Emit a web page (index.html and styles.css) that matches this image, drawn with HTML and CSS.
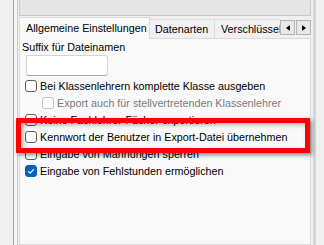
FILE: index.html
```html
<!DOCTYPE html>
<html lang="de">
<head>
    <meta charset="UTF-8">
    <title>Export-Einstellungen</title>
    <link rel="stylesheet" href="styles.css">
</head>
<body>
    <div class="window">
        <div class="splitter"></div>

        <div class="panel">
            <div class="toolbar"></div>

            <!-- Tabs -->
            <div class="tabstrip">
                <div class="tabs">
                    <div class="tab active">Allgemeine Einstellungen</div>
                    <div class="tab">Datenarten</div>
                    <div class="tab">Verschlüsselung</div>
                </div>
                <div class="tab-scroll">
                    <span class="scroll-btn"><span class="arrow left"></span></span>
                    <span class="scroll-btn"><span class="arrow right"></span></span>
                </div>
            </div>

            <!-- Allgemeine Einstellungen -->
            <div class="page">
                <div class="field-label">Suffix für Dateinamen</div>
                <input class="field" type="text">

                <label class="check"><span class="box"></span>Bei Klassenlehrern komplette Klasse ausgeben</label>
                <label class="check sub disabled"><span class="box"></span>Export auch für stellvertretenden Klassenlehrer</label>
                <label class="check"><span class="box"></span>Keine Fachlehrer-Fächer exportieren</label>
                <label class="check"><span class="box"></span>Kennwort der Benutzer in Export-Datei übernehmen</label>
                <label class="check"><span class="box"></span>Eingabe von Mahnungen sperren</label>
                <label class="check"><span class="box checked">
                    <svg width="12" height="12" viewBox="0 0 12 12"><path d="M3.2 6.2 L5.2 8.1 L8.9 4.2" fill="none" stroke="#fff" stroke-width="1.1"/></svg>
                </span>Eingabe von Fehlstunden ermöglichen</label>
            </div>
        </div>

        <div class="right-edge"></div>

        <!-- Markierung -->
        <div class="highlight"></div>
    </div>
</body>
</html>
```

FILE: styles.css
```css
body {
    margin: 0;
    background: #f0f0f0;
    font-family: "Liberation Sans", Arial, sans-serif;
    font-size: 10.75px;
    color: #000;
}
.window {
    position: relative;
    display: flex;
    height: 245px;
    padding-left: 13px;
    overflow: hidden;
}
.splitter {
    width: 3px;
    border-left: 1px solid #a0a0a0;
    border-right: 1px solid #c8c8c8;
    background: #f7f7f7;
    margin-right: 1px;
}
.panel {
    width: 292px;
    display: flex;
    flex-direction: column;
}
.toolbar {
    height: 15px;
    background: #e6e6e6;
    border: 1px solid #c9c9c9;
    border-top: none;
    flex-shrink: 0;
}
.tabstrip {
    display: flex;
    height: 23px;
    margin-bottom: -1px;
    position: relative;
    z-index: 1;
    flex-shrink: 0;
}
.tabs {
    display: flex;
    align-items: flex-end;
    width: 261px;
    overflow: hidden;
}
.tab {
    box-sizing: border-box;
    height: 20px;
    line-height: 19px;
    padding: 0 5px;
    border: 1px solid #dadada;
    border-left: none;
    background: #f0f0f0;
    white-space: nowrap;
    flex-shrink: 0;
}
.tab.active {
    width: 131px;
    height: 22px;
    line-height: 20px;
    padding-left: 6px;
    border-left: 1px solid #dadada;
    border-bottom: none;
    background: #f9f9f9;
}
.tab.active + .tab {
    width: 65px;
}
.tab:last-child {
    padding-left: 6px;
}
.tab-scroll {
    display: flex;
    gap: 1px;
    margin-top: 4px;
}
.scroll-btn {
    box-sizing: border-box;
    width: 15px;
    height: 15px;
    background: #e8e8e8;
    border: 1px solid #b4b4b4;
    display: flex;
    align-items: center;
    justify-content: center;
}
.arrow {
    width: 0;
    height: 0;
    border-top: 3px solid transparent;
    border-bottom: 3px solid transparent;
}
.arrow.left {
    border-right: 4px solid #000;
}
.arrow.right {
    border-left: 4px solid #000;
}
.page {
    flex: 1;
    background: #f9f9f9;
    border: 1px solid #dadada;
    padding: 2px 0 0 2px;
}
.field-label {
    line-height: 13px;
}
.field {
    display: block;
    box-sizing: border-box;
    width: 82px;
    height: 21px;
    margin: 1px 0 1px 4px;
    background: #fff;
    border: 1px solid #d4d4d4;
    border-bottom-color: #a8a8a8;
    border-radius: 3px;
    padding: 0;
}
.check {
    display: flex;
    align-items: center;
    gap: 3px;
    height: 17px;
    margin-left: 3px;
    white-space: nowrap;
}
.check.sub {
    margin-left: 20px;
}
.box {
    box-sizing: border-box;
    width: 12px;
    height: 12px;
    border: 1px solid #5c5c5c;
    border-radius: 3px;
    background: #fff;
    flex-shrink: 0;
    display: flex;
}
.box.checked {
    background: #0062c1;
    border-color: #0062c1;
}
.box.checked svg {
    margin: -1px;
}
.disabled {
    color: #7a7a7a;
}
.disabled .box {
    border-color: #c4c4c4;
}
.right-edge {
    width: 3px;
    margin-left: 2px;
    background: #d6d6d6;
}
.highlight {
    position: absolute;
    left: 16px;
    top: 118px;
    width: 294px;
    height: 35px;
    box-sizing: border-box;
    border: 5px solid #f00;
    box-shadow: 2px 2px 4px rgba(0, 0, 0, 0.45), inset 2px 2px 4px rgba(0, 0, 0, 0.3);
}
```
